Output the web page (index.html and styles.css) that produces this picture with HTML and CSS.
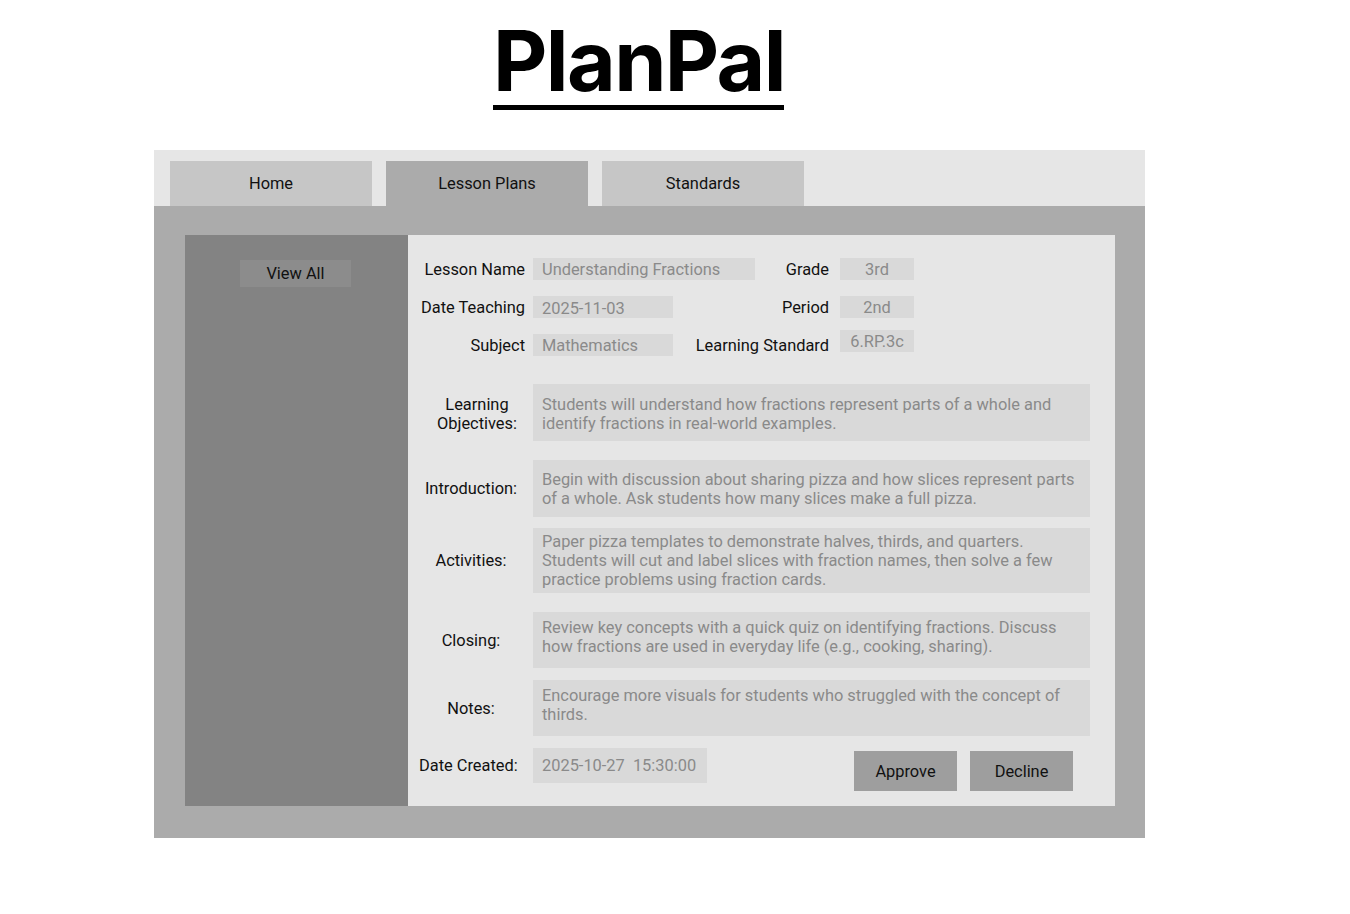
FILE: index.html
```html
<!DOCTYPE html>
<html>
<head>
<meta charset="utf-8">
<title>PlanPal</title>
<link rel="stylesheet" href="styles.css">
</head>
<body>
<div class="page">
  <header class="brand">
    <h1 class="logo">PlanPal</h1>
  </header>
  <section class="app">
    <nav class="tabs">
      <div class="tab">Home</div>
      <div class="tab active">Lesson Plans</div>
      <div class="tab">Standards</div>
    </nav>
    <div class="stage">
      <aside class="sidebar">
        <div class="view-all">View All</div>
      </aside>
      <main class="content">
        <div class="meta">
          <div class="meta-row">
            <span class="meta-label">Lesson Name</span>
            <span class="field wide">Understanding Fractions</span>
            <span class="meta-label2">Grade</span>
            <span class="field small">3rd</span>
          </div>
          <div class="meta-row">
            <span class="meta-label">Date Teaching</span>
            <span class="field mid date">2025-11-03</span>
            <span class="meta-label2">Period</span>
            <span class="field small">2nd</span>
          </div>
          <div class="meta-row">
            <span class="meta-label">Subject</span>
            <span class="field mid">Mathematics</span>
            <span class="meta-label2">Learning Standard</span>
            <span class="field small raised">6.RP.3c</span>
          </div>
        </div>
        <div class="sections">
          <div class="sec-row">
            <div class="sec-label objectives">Learning<br>Objectives:</div>
            <div class="box lower">Students will understand how fractions represent parts of a whole and<br>identify fractions in real-world examples.</div>
          </div>
          <div class="sec-row spaced">
            <div class="sec-label">Introduction:</div>
            <div class="box">Begin with discussion about sharing pizza and how slices represent parts<br>of a whole. Ask students how many slices make a full pizza.</div>
          </div>
          <div class="sec-row tight">
            <div class="sec-label">Activities:</div>
            <div class="box tall">Paper pizza templates to demonstrate halves, thirds, and quarters.<br>Students will cut and label slices with fraction names, then solve a few<br>practice problems using fraction cards.</div>
          </div>
          <div class="sec-row spaced">
            <div class="sec-label">Closing:</div>
            <div class="box top">Review key concepts with a quick quiz on identifying fractions. Discuss<br>how fractions are used in everyday life (e.g., cooking, sharing).</div>
          </div>
          <div class="sec-row">
            <div class="sec-label">Notes:</div>
            <div class="box top">Encourage more visuals for students who struggled with the concept of<br>thirds.</div>
          </div>
          <div class="footer-row">
            <div class="created-label">Date Created:</div>
            <div class="created">2025-10-27&nbsp;&nbsp;15:30:00</div>
            <div class="actions">
              <div class="btn">Approve</div>
              <div class="btn">Decline</div>
            </div>
          </div>
        </div>
      </main>
    </div>
  </section>
</div>
</body>
</html>
```

FILE: styles.css
```css
* { box-sizing: border-box; }
html, body { margin: 0; padding: 0; background: #ffffff; }
body { font-family: "Roboto", "Liberation Sans", sans-serif; color: #111; font-size: 16.4px; }

.page {
  padding-left: 154px;
  width: 1145px;
}

.brand {
  display: flex;
  padding-top: 19px;
  padding-left: 339px;
}
.logo {
  margin: 0;
  font-family: "Inter", "Liberation Sans", sans-serif;
  font-weight: 700;
  font-size: 84px;
  line-height: 84px;
  letter-spacing: -1.6px;
  color: #000;
  padding-bottom: 2px;
  border-bottom: 5px solid #000;
  width: 291px;
  white-space: nowrap;
}

.app {
  margin-top: 40px;
  width: 991px;
}

.tabs {
  display: flex;
  gap: 14px;
  height: 56px;
  padding: 11px 0 0 16px;
  background: #e6e6e6;
}
.tab {
  width: 202px;
  height: 45px;
  display: flex;
  align-items: center;
  justify-content: center;
  background: #c6c6c6;
  color: #111;
}
.tab.active { background: #ababab; }

.stage {
  display: flex;
  background: #ababab;
  padding: 29px 30px 32px 31px;
}

.sidebar {
  width: 223px;
  background: #838383;
  display: flex;
  flex-direction: column;
  align-items: center;
  padding-top: 25px;
}
.view-all {
  width: 111px;
  height: 27px;
  margin-right: 2px;
  background: #8c8c8c;
  display: flex;
  align-items: center;
  justify-content: center;
  color: #111;
}

.content {
  width: 707px;
  background: #e6e6e6;
  padding: 23px 25px 15px 10px;
}

.meta {
  width: 496px;
  display: flex;
  flex-direction: column;
  gap: 16px;
}
.meta-row {
  display: flex;
  align-items: center;
  height: 22px;
}
.meta-label {
  width: 107px;
  text-align: right;
  white-space: nowrap;
  margin-right: 8px;
  color: #111;
}
.meta-label2 {
  margin-left: auto;
  margin-right: 11px;
  white-space: nowrap;
  color: #111;
}
.field {
  height: 22px;
  background: #d9d9d9;
  color: #8a8a8a;
  display: flex;
  align-items: center;
  padding-left: 9px;
  white-space: nowrap;
}
.field.wide { width: 222px; }
.field.mid { width: 140px; }
.field.date { padding-top: 3px; }
.field.small { width: 74px; justify-content: center; padding-left: 0; }
.field.raised { margin-top: -8px; }

.sections {
  margin-top: 28px;
  display: flex;
  flex-direction: column;
  gap: 12px;
}
.sec-row {
  display: flex;
  align-items: center;
}
.sec-row.spaced { margin-top: 7px; }
.sec-row.tight { margin-top: -1px; }
.sec-label {
  width: 106px;
  margin-right: 9px;
  text-align: center;
  line-height: 19px;
  color: #111;
}
.sec-label.objectives { padding-left: 12px; padding-top: 2px; }
.box {
  width: 557px;
  height: 57px;
  background: #d9d9d9;
  color: #8a8a8a;
  line-height: 19px;
  padding: 0 9px;
  display: flex;
  align-items: center;
  white-space: nowrap;
}
.box.lower { padding-top: 2px; }
.box.top { align-items: flex-start; padding-top: 6px; height: 56px; }
.box.tall { height: 65px; }

.footer-row {
  display: flex;
  align-items: flex-start;
}
.created-label {
  width: 106px;
  margin-right: 9px;
  padding-left: 1px;
  height: 35px;
  display: flex;
  align-items: center;
  color: #111;
  white-space: nowrap;
}
.created {
  width: 174px;
  height: 35px;
  background: #d9d9d9;
  color: #8a8a8a;
  padding-left: 9px;
  display: flex;
  align-items: center;
  white-space: nowrap;
}
.actions {
  margin-left: auto;
  margin-right: 17px;
  margin-top: 3px;
  display: flex;
  gap: 13px;
}
.btn {
  width: 103px;
  height: 40px;
  background: #9e9e9e;
  display: flex;
  align-items: center;
  justify-content: center;
  color: #111;
}
```
